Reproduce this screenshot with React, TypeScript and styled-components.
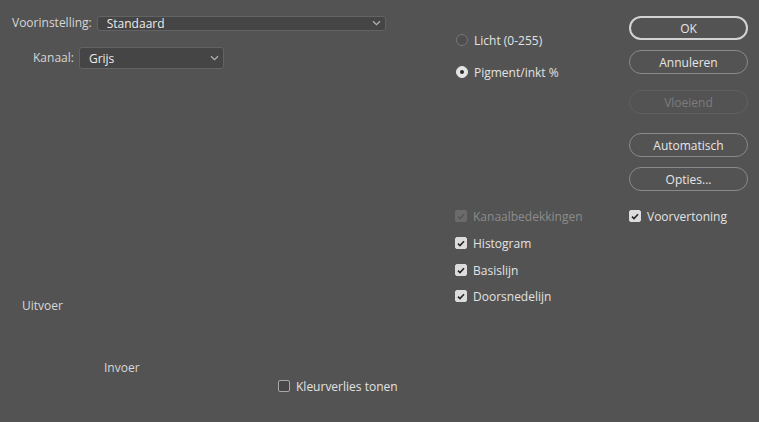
import React from "react";
import styled, { createGlobalStyle } from "styled-components";

const GlobalStyle = createGlobalStyle`
    html, body {
        margin: 0;
        padding: 0;
        background: #535353;
    }
    body {
        font-family: "Open Sans", "Noto Sans", sans-serif;
        font-size: 12px;
        color: #dedede;
    }
`;

const Dialog = styled.div`
    width: 759px;
    height: 422px;
    background: #535353;
    display: flex;
    overflow: hidden;
`;

const LeftPane = styled.div`
    width: 455px;
    padding-left: 12px;
    box-sizing: border-box;
    display: flex;
    flex-direction: column;
`;

const MiddlePane = styled.div`
    width: 174px;
    display: flex;
    flex-direction: column;
`;

const RightPane = styled.div`
    width: 130px;
    display: flex;
    flex-direction: column;
`;

const FieldRow = styled.div<{ $top: number; $indent?: number }>`
    display: flex;
    align-items: center;
    gap: 5px;
    margin-top: ${({ $top }) => $top}px;
    padding-left: ${({ $indent }) => $indent ?? 0}px;
`;

const FieldLabel = styled.span`
    font-size: 12px;
    line-height: 16px;
    color: #d6d6d6;
    white-space: nowrap;
`;

const Select = styled.div<{ $width: number; $height: number }>`
    width: ${({ $width }) => $width}px;
    height: ${({ $height }) => $height}px;
    box-sizing: border-box;
    background: #454545;
    border: 1px solid #636363;
    border-radius: 3px;
    display: flex;
    align-items: center;
    justify-content: space-between;
    padding: 0 4px 0 9px;
    font-size: 12px;
    color: #ececec;
`;

const Chevron = () => (
    <svg width="9" height="6" viewBox="0 0 9 6">
        <path d="M1 1.2 L4.5 4.6 L8 1.2" fill="none" stroke="#b5b5b5" strokeWidth="1.2" />
    </svg>
);

const AxisLabel = styled.span<{ $top: number; $indent: number }>`
    display: block;
    margin-top: ${({ $top }) => $top}px;
    padding-left: ${({ $indent }) => $indent}px;
    line-height: 16px;
    font-size: 12px;
    color: #d8d8d8;
`;

const OptionRow = styled.label<{ $top: number; $indent?: number; $disabled?: boolean }>`
    display: flex;
    align-items: center;
    gap: 6px;
    height: 16px;
    margin-top: ${({ $top }) => $top}px;
    padding-left: ${({ $indent }) => $indent ?? 0}px;
    font-size: 12px;
    color: ${({ $disabled }) => ($disabled ? "#8c8c8c" : "#e2e2e2")};
    white-space: nowrap;
`;

const RadioDot = styled.span<{ $checked?: boolean }>`
    width: 12px;
    height: 12px;
    box-sizing: border-box;
    border-radius: 50%;
    flex: none;
    display: flex;
    align-items: center;
    justify-content: center;
    background: ${({ $checked }) => ($checked ? "#e4e4e4" : "#4e4e4e")};
    border: 1px solid ${({ $checked }) => ($checked ? "#e4e4e4" : "#767676")};
    &::after {
        content: "";
        width: 4px;
        height: 4px;
        border-radius: 50%;
        background: ${({ $checked }) => ($checked ? "#2a2a2a" : "transparent")};
    }
`;

const Box = styled.span<{ $checked?: boolean; $disabled?: boolean }>`
    width: 12px;
    height: 12px;
    box-sizing: border-box;
    border-radius: 2px;
    flex: none;
    display: flex;
    align-items: center;
    justify-content: center;
    background: ${({ $checked, $disabled }) =>
        $disabled ? "#6b6b6b" : $checked ? "#dcdcdc" : "#474747"};
    border: 1px solid ${({ $checked, $disabled }) =>
        $disabled ? "#6b6b6b" : $checked ? "#dcdcdc" : "#a8a8a8"};
`;

const Check = ({ color }: { color: string }) => (
    <svg width="8" height="7" viewBox="0 0 8 7">
        <path d="M1 3.6 L3 5.5 L7 1.3" fill="none" stroke={color} strokeWidth="1.6" />
    </svg>
);

const Button = styled.button<{ $top: number; $primary?: boolean }>`
    width: 119px;
    height: 24px;
    margin-top: ${({ $top }) => $top}px;
    box-sizing: border-box;
    border-radius: 12px;
    background: transparent;
    font-family: "Open Sans", "Noto Sans", sans-serif;
    font-size: 12px;
    color: #e6e6e6;
    padding: 0;
    border: ${({ $primary }) => ($primary ? "2px solid #d2d2d2" : "1px solid #8a8a8a")};
    &:disabled {
        color: #7c7c7c;
        border-color: #606060;
    }
`;

function Checkbox({ label, checked, disabled, top, indent }: {
    label: string; checked?: boolean; disabled?: boolean; top: number; indent?: number;
}) {
    return (
        <OptionRow $top={top} $indent={indent} $disabled={disabled}>
            <Box $checked={checked} $disabled={disabled}>
                {checked && <Check color={disabled ? "#575757" : "#262626"} />}
            </Box>
            {label}
        </OptionRow>
    );
}

export default function App() {
    return (
        <>
            <GlobalStyle />
            <Dialog>
                <LeftPane>
                    <FieldRow $top={15}>
                        <FieldLabel>Voorinstelling:</FieldLabel>
                        <Select $width={289} $height={15}>
                            Standaard
                            <Chevron />
                        </Select>
                    </FieldRow>
                    <FieldRow $top={16} $indent={21}>
                        <FieldLabel>Kanaal:</FieldLabel>
                        <Select $width={145} $height={22}>
                            Grijs
                            <Chevron />
                        </Select>
                    </FieldRow>
                    <AxisLabel $top={229} $indent={10}>Uitvoer</AxisLabel>
                    <AxisLabel $top={46} $indent={92}>Invoer</AxisLabel>
                    <Checkbox label="Kleurverlies tonen" top={2} indent={266} />
                </LeftPane>
                <MiddlePane>
                    <OptionRow $top={32} $indent={1}>
                        <RadioDot />
                        Licht (0-255)
                    </OptionRow>
                    <OptionRow $top={16} $indent={1}>
                        <RadioDot $checked />
                        Pigment/inkt %
                    </OptionRow>
                    <Checkbox label="Kanaalbedekkingen" checked disabled top={128} />
                    <Checkbox label="Histogram" checked top={11} />
                    <Checkbox label="Basislijn" checked top={11} />
                    <Checkbox label="Doorsnedelijn" checked top={10} />
                </MiddlePane>
                <RightPane>
                    <Button $top={16} $primary>OK</Button>
                    <Button $top={10}>Annuleren</Button>
                    <Button $top={16} disabled>Vloeiend</Button>
                    <Button $top={19}>Automatisch</Button>
                    <Button $top={10}>Opties...</Button>
                    <Checkbox label="Voorvertoning" checked top={17} />
                </RightPane>
            </Dialog>
        </>
    );
}
